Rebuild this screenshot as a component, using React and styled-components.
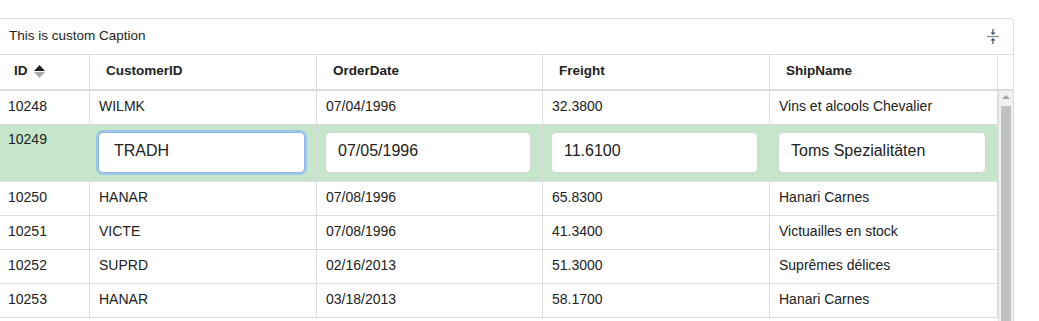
import React from 'react';
import styled, { createGlobalStyle } from 'styled-components';

const GlobalStyle = createGlobalStyle`
    body {
        margin: 0;
        background: #fff;
        font-family: "Liberation Sans", Arial, sans-serif;
        color: #333;
    }
`;

const columns = [
    { key: 'id', title: 'ID', width: 90, sorted: true },
    { key: 'customer', title: 'CustomerID', width: 227 },
    { key: 'date', title: 'OrderDate', width: 226 },
    { key: 'freight', title: 'Freight', width: 227 },
    { key: 'ship', title: 'ShipName', width: 228 },
];

const rows = [
    { id: '10248', customer: 'WILMK', date: '07/04/1996', freight: '32.3800', ship: 'Vins et alcools Chevalier' },
    { id: '10249', customer: 'TRADH', date: '07/05/1996', freight: '11.6100', ship: 'Toms Spezialitäten', editing: true },
    { id: '10250', customer: 'HANAR', date: '07/08/1996', freight: '65.8300', ship: 'Hanari Carnes' },
    { id: '10251', customer: 'VICTE', date: '07/08/1996', freight: '41.3400', ship: 'Victuailles en stock' },
    { id: '10252', customer: 'SUPRD', date: '02/16/2013', freight: '51.3000', ship: 'Suprêmes délices' },
    { id: '10253', customer: 'HANAR', date: '03/18/2013', freight: '58.1700', ship: 'Hanari Carnes' },
];

const SortIcon = () => (
    <svg width="11" height="13" viewBox="0 0 11 13">
        <path d="M5.5 0 L11 6 L0 6 Z" fill="#222" />
        <path d="M0 7 L11 7 L5.5 13 Z" fill="#aaa" />
    </svg>
);

const CollapseIcon = () => (
    <svg width="12" height="15" viewBox="0 0 12 15">
        <path d="M6 0 V5" stroke="#3a4a5c" strokeWidth="1.2" />
        <path d="M3.5 3.5 L6 6 L8.5 3.5 Z" fill="#3a4a5c" />
        <path d="M0 7.5 H12" stroke="#888" strokeWidth="1.2" />
        <path d="M3.5 11.5 L6 9 L8.5 11.5 Z" fill="#3a4a5c" />
        <path d="M6 10 V15" stroke="#3a4a5c" strokeWidth="1.2" />
    </svg>
);

const App = () => {
    return (
        <>
            <GlobalStyle />
            <Page>
                <Grid>
                    <Caption>
                        <span>This is custom Caption</span>
                        <CollapseButton>
                            <CollapseIcon />
                        </CollapseButton>
                    </Caption>

                    <HeaderRow>
                        {columns.map((col) => (
                            <HeaderCell key={col.key} $width={col.width}>
                                {col.title}
                                {col.sorted && (
                                    <SortWrap>
                                        <SortIcon />
                                    </SortWrap>
                                )}
                            </HeaderCell>
                        ))}
                        <HeaderFiller />
                    </HeaderRow>

                    <Body>
                        <Rows>
                            {rows.map((row) => (
                                <Row key={row.id} $editing={row.editing}>
                                    {columns.map((col, i) =>
                                        row.editing && i > 0 ? (
                                            <EditCell key={col.key} $width={col.width}>
                                                <Input
                                                    defaultValue={row[col.key]}
                                                    $focused={col.key === 'customer'}
                                                />
                                            </EditCell>
                                        ) : (
                                            <Cell key={col.key} $width={col.width} $editing={row.editing}>
                                                {row[col.key]}
                                            </Cell>
                                        )
                                    )}
                                </Row>
                            ))}
                        </Rows>
                        <ScrollTrack>
                            <ScrollArrow />
                            <ScrollThumb />
                        </ScrollTrack>
                    </Body>
                </Grid>
            </Page>
        </>
    );
};

// Styled Components
const Page = styled.div`
    padding-top: 18px;
    width: 1039px;
    height: 321px;
    overflow: hidden;
    box-sizing: border-box;
`;

const Grid = styled.div`
    width: 1015px;
    margin-left: -1px;
    border: 1px solid #dcdcdc;
    border-radius: 3px 3px 0 0;
    box-sizing: border-box;
    font-size: 14px;
`;

const Caption = styled.div`
    display: flex;
    align-items: center;
    justify-content: space-between;
    height: 36px;
    padding: 0 14px 3px 9px;
    box-sizing: border-box;
    color: #222;
    border-bottom: 1px solid #dcdcdc;
    font-size: 13.5px;
`;

const CollapseButton = styled.span`
    display: flex;
    align-items: center;
    padding-top: 3px;
`;

const HeaderRow = styled.div`
    display: flex;
    height: 34px;
    border-bottom: 2px solid #dcdcdc;
`;

const HeaderCell = styled.div`
    display: flex;
    align-items: center;
    width: ${(p) => p.$width}px;
    flex: none;
    box-sizing: border-box;
    padding: 0 0 3px 16px;
    font-weight: bold;
    font-size: 13.5px;
    color: #222;
    border-right: 1px solid #dcdcdc;

    &:first-child {
        padding-left: 14px;
    }
`;

const SortWrap = styled.span`
    display: flex;
    margin-left: 6px;
    margin-top: 2px;
`;

const HeaderFiller = styled.div`
    width: 16px;
    flex: none;
`;

const Body = styled.div`
    display: flex;
    height: 240px;
    overflow: hidden;
`;

const Rows = styled.div`
    width: 998px;
    flex: none;
`;

const Row = styled.div`
    display: flex;
    height: ${(p) => (p.$editing ? 57 : 34)}px;
    background: ${(p) => (p.$editing ? '#c5e6cb' : '#fff')};
    border-bottom: 1px solid #dcdcdc;
    box-sizing: border-box;
`;

const Cell = styled.div`
    display: flex;
    align-items: ${(p) => (p.$editing ? 'flex-start' : 'center')};
    width: ${(p) => p.$width}px;
    flex: none;
    box-sizing: border-box;
    padding: ${(p) => (p.$editing ? '6px 9px 0 8px' : '0 9px 4px 9px')};
    color: #222;
    border-right: 1px solid #dcdcdc;
    white-space: nowrap;
    overflow: hidden;

    &:first-child {
        padding-left: 8px;
    }
`;

const EditCell = styled.div`
    width: ${(p) => p.$width}px;
    flex: none;
    box-sizing: border-box;
    padding: 7px 11px 0 8px;
    border-right: 1px solid #dcdcdc;
`;

const Input = styled.input`
    display: block;
    width: 100%;
    height: 41px;
    box-sizing: border-box;
    padding: 0 12px 3px;
    font-family: "Liberation Sans", Arial, sans-serif;
    font-size: 16px;
    color: #222;
    background: #fff;
    border: 1px solid ${(p) => (p.$focused ? '#8fb8e0' : '#d6d6d6')};
    border-radius: 5px;
    outline: none;
    box-shadow: ${(p) => (p.$focused ? '0 0 0 2px #9cc6ea' : 'none')};
    padding-left: ${(p) => (p.$focused ? 15 : 12)}px;
`;

const ScrollTrack = styled.div`
    width: 15px;
    flex: none;
    background: #f1f1f1;
    border-left: 1px solid #dcdcdc;
    box-sizing: border-box;
    padding: 4px 2px 0 2px;
`;

const ScrollArrow = styled.div`
    width: 0;
    height: 0;
    margin: 0 auto;
    border-left: 4px solid transparent;
    border-right: 4px solid transparent;
    border-bottom: 4px solid #a3a3a3;
`;

const ScrollThumb = styled.div`
    margin-top: 7px;
    height: 260px;
    background: #c1c1c1;
`;

export default App;
